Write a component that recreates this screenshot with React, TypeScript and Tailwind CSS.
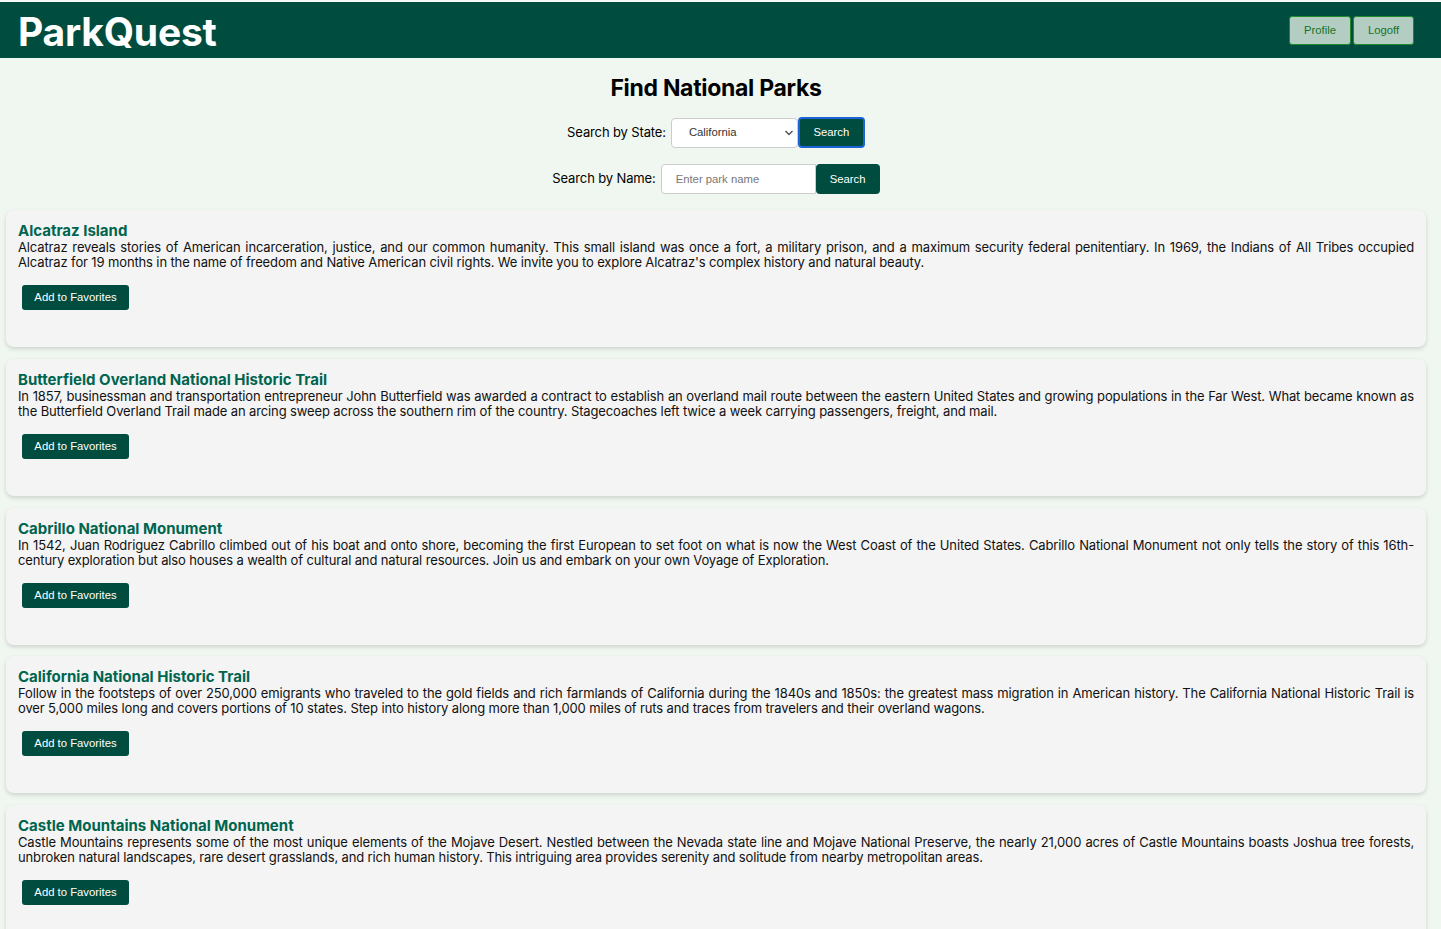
import React from "react";

const parks = [
  {
    name: "Alcatraz Island",
    desc: "Alcatraz reveals stories of American incarceration, justice, and our common humanity. This small island was once a fort, a military prison, and a maximum security federal penitentiary. In 1969, the Indians of All Tribes occupied Alcatraz for 19 months in the name of freedom and Native American civil rights. We invite you to explore Alcatraz's complex history and natural beauty.",
  },
  {
    name: "Butterfield Overland National Historic Trail",
    desc: "In 1857, businessman and transportation entrepreneur John Butterfield was awarded a contract to establish an overland mail route between the eastern United States and growing populations in the Far West. What became known as the Butterfield Overland Trail made an arcing sweep across the southern rim of the country. Stagecoaches left twice a week carrying passengers, freight, and mail.",
  },
  {
    name: "Cabrillo National Monument",
    desc: "In 1542, Juan Rodriguez Cabrillo climbed out of his boat and onto shore, becoming the first European to set foot on what is now the West Coast of the United States. Cabrillo National Monument not only tells the story of this 16th-century exploration but also houses a wealth of cultural and natural resources. Join us and embark on your own Voyage of Exploration.",
  },
  {
    name: "California National Historic Trail",
    desc: "Follow in the footsteps of over 250,000 emigrants who traveled to the gold fields and rich farmlands of California during the 1840s and 1850s: the greatest mass migration in American history. The California National Historic Trail is over 5,000 miles long and covers portions of 10 states. Step into history along more than 1,000 miles of ruts and traces from travelers and their overland wagons.",
  },
  {
    name: "Castle Mountains National Monument",
    desc: "Castle Mountains represents some of the most unique elements of the Mojave Desert. Nestled between the Nevada state line and Mojave National Preserve, the nearly 21,000 acres of Castle Mountains boasts Joshua tree forests, unbroken natural landscapes, rare desert grasslands, and rich human history. This intriguing area provides serenity and solitude from nearby metropolitan areas.",
  },
];

export default function App() {
  return (
    <div className="min-h-[929px] bg-[#f0f7f1] font-['Inter',sans-serif] text-black border-t-2 border-[#f7f9f7]">
      <header className="h-[56px] bg-[#004d40] flex items-center justify-between pl-[18px] pr-[27px]">
        <div className="text-white font-bold text-[39px] leading-none tracking-[-0.2px] mt-[2px]">ParkQuest</div>
        <div className="flex gap-[2px] font-['Liberation_Sans',Arial,sans-serif]">
          <button className="w-[62px] h-[29px] rounded-[3px] border border-[#1f8a2a] bg-[#b3cdc3] text-[#16731f] text-[11.3px] pt-[1px]">Profile</button>
          <button className="w-[61px] h-[29px] rounded-[3px] border border-[#1f8a2a] bg-[#b3cdc3] text-[#16731f] text-[11.3px] pt-[1px]">Logoff</button>
        </div>
      </header>

      <div className="pr-[9px]">
        <h1 className="text-center font-bold text-[23px] leading-[28px] mt-[16px] tracking-[-0.3px]">Find National Parks</h1>

        <div className="flex justify-center items-center mt-[15px] text-[13px] tracking-[-0.13px]">
          <span className="mr-[5px]">Search by State:</span>
          <div className="relative w-[127px] h-[30px] bg-white border border-[#cccccc] rounded-[4px] flex items-center">
            <span className="pl-[17px] text-[11.3px] tracking-normal text-[#333] font-['Liberation_Sans',Arial,sans-serif]">California</span>
            <svg className="absolute right-[3px] top-[10px]" width="10" height="8" viewBox="0 0 10 8">
              <path d="M1.5 2 L5 5.5 L8.5 2" stroke="#555" strokeWidth="1.5" fill="none" />
            </svg>
          </div>
          <button className="w-[67px] h-[31px] bg-[#004d40] text-white text-[11.3px] tracking-normal rounded-[4px] border-2 border-[#1b64d6] font-['Liberation_Sans',Arial,sans-serif]">Search</button>
        </div>

        <div className="flex justify-center items-center mt-[16px] text-[13px] tracking-[-0.13px]">
          <span className="mr-[5px]">Search by Name:</span>
          <input
            placeholder="Enter park name"
            className="w-[155px] h-[30px] bg-white border border-[#cccccc] rounded-l-[4px] pl-[14px] text-[11.3px] tracking-normal placeholder:text-[#777] font-['Liberation_Sans',Arial,sans-serif] outline-none"
          />
          <button className="w-[64px] h-[30px] bg-[#004d40] text-white text-[11.3px] tracking-normal rounded-[4px] font-['Liberation_Sans',Arial,sans-serif]">Search</button>
        </div>
      </div>

      <div className="flex flex-col gap-[11.75px] mt-[16px] ml-[6px] mr-[15px]">
        {parks.map((p) => (
          <div key={p.name} className="h-[137px] bg-[#f4f4f4] rounded-[8px] shadow-[0_2px_4px_rgba(0,0,0,0.15)] px-[12px] pt-[12px]">
            <h2 className="text-[15px] font-bold text-[#00654f] leading-[18px]">{p.name}</h2>
            <p className="text-[13px] leading-[15px] text-justify text-[#111] tracking-[-0.13px]">{p.desc}</p>
            <button className="mt-[15px] ml-[4px] w-[107px] h-[25px] bg-[#004d40] text-white text-[11.3px] rounded-[3px] font-['Liberation_Sans',Arial,sans-serif]">Add to Favorites</button>
          </div>
        ))}
      </div>
    </div>
  );
}
